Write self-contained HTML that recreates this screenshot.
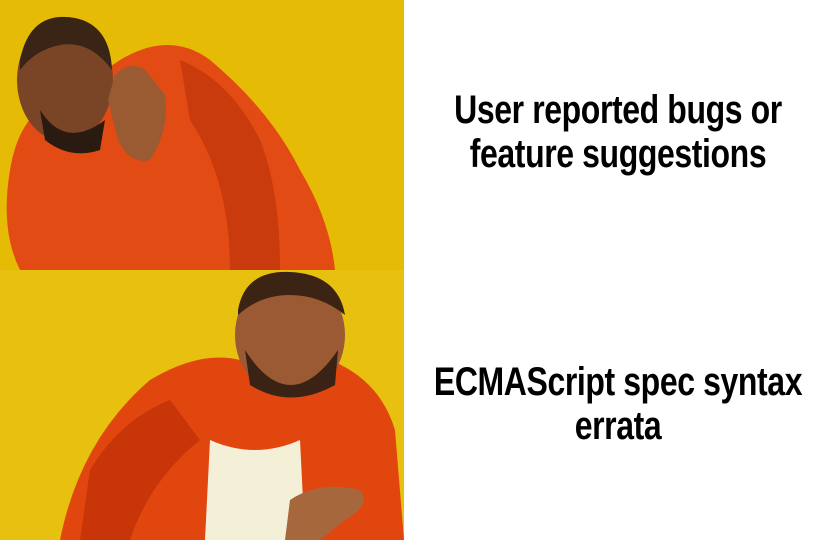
<!DOCTYPE html>
<html><head><meta charset="utf-8"><style>
html,body{margin:0;padding:0;background:#fff;width:819px;height:540px;overflow:hidden}
.t{position:absolute;left:218px;width:800px;text-align:center;font-family:"Liberation Sans Narrow","Liberation Sans",sans-serif;font-weight:bold;font-size:40px;line-height:44px;color:#000;letter-spacing:-0.5px;transform:scaleX(0.8);transform-origin:50% 50%;white-space:nowrap}
svg{position:absolute;left:0;top:0}
</style></head><body>
<svg width="404" height="540" viewBox="0 0 404 540">
<rect x="0" y="0" width="404" height="270" fill="#e5bb05"/>
<rect x="0" y="270" width="404" height="270" fill="#e8c010"/>
<path d="M10 170 Q20 110 60 100 L120 60 Q170 30 210 60 Q270 110 300 170 Q330 220 335 270 L20 270 Q0 230 10 170Z" fill="#e34b14"/>
<path d="M180 60 Q230 80 260 140 Q280 190 280 270 L230 270 Q230 180 190 120Z" fill="#c93a0c"/>
<ellipse cx="65" cy="80" rx="48" ry="62" fill="#7a4526"/>
<path d="M20 60 Q30 10 75 18 Q110 25 112 70 Q90 40 60 45 Q35 50 20 70Z" fill="#3a2416"/>
<path d="M40 110 Q65 150 105 120 L100 150 Q70 160 45 140Z" fill="#2b1a10"/>
<path d="M115 75 Q130 60 145 70 L165 95 Q170 130 150 160 Q130 165 118 140 L108 100Z" fill="#9a5a32"/>
<path d="M60 540 Q80 440 150 380 Q200 350 240 360 L330 360 Q380 380 395 430 L404 540Z" fill="#e2460f"/>
<path d="M90 470 Q120 420 170 400 L200 440 Q150 480 130 540 L80 540Z" fill="#c73508"/>
<path d="M210 440 Q255 460 300 440 L305 540 L205 540Z" fill="#f4f0d8"/>
<ellipse cx="290" cy="335" rx="55" ry="62" fill="#9b5a33"/>
<path d="M238 310 Q245 270 290 272 Q338 274 345 315 Q320 295 290 295 Q260 295 238 315Z" fill="#3c2414"/>
<path d="M245 350 Q290 420 338 350 L335 385 Q290 410 250 385Z" fill="#3a2214"/>
<path d="M290 500 Q320 480 360 490 Q372 505 345 520 L320 540 L285 540Z" fill="#a6673c"/>
</svg>
<div class="t" style="top:88px">User reported bugs or<br>feature suggestions</div>
<div class="t" style="top:360px">ECMAScript spec syntax<br>errata</div>
</body></html>
